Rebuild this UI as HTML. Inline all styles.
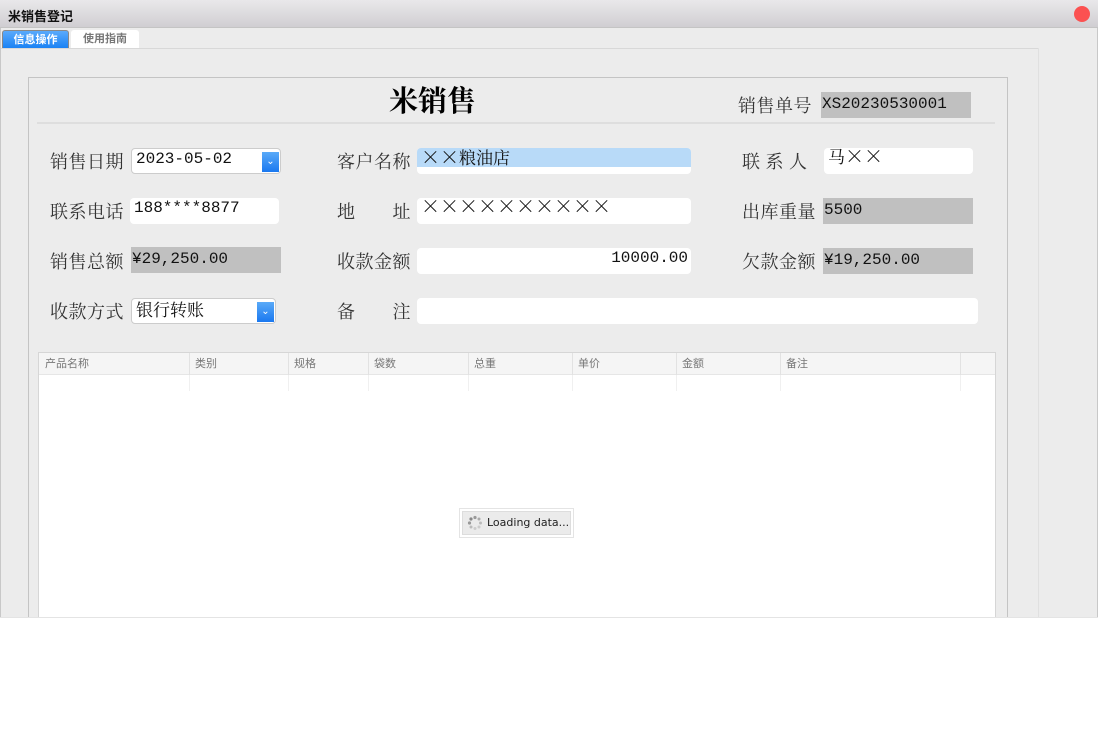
<!DOCTYPE html>
<html><head><meta charset="utf-8"><style>
*{margin:0;padding:0;box-sizing:border-box}
body{width:1098px;height:737px;background:#fff;position:relative;overflow:hidden;font-family:"Liberation Serif","Noto Serif CJK SC",serif}
.a{position:absolute}
.win{left:0;top:0;width:1098px;height:618px;background:#ececec;border:1px solid #c8c8c8;border-top:none}
.tb{left:0;top:0;width:1098px;height:28px;background:linear-gradient(#e9e8ea,#d0ced2);border-bottom:1px solid #c4c4c4}
.tt{left:8px;top:6px;font:bold 13px "Liberation Sans","Noto Sans CJK SC",sans-serif;color:#111}
.close{left:1074px;top:6px;width:16px;height:16px;border-radius:50%;background:#fb5151}
.tab{top:30px;height:18px;font:bold 11px "Liberation Sans","Noto Sans CJK SC",sans-serif;text-align:center;line-height:18px}
.lbl{font-size:18px;color:#333;line-height:20px;white-space:nowrap;letter-spacing:0.5px}
.in{background:#fff;border-radius:4px;height:26px;font:16px "Liberation Mono","Noto Serif CJK SC",monospace;line-height:20px;padding-left:4px;color:#111;white-space:nowrap;overflow:hidden}
.cj{font-family:"Noto Serif CJK SC",serif;font-size:17px}
.x{font-family:"Noto Sans CJK SC",sans-serif;font-size:19px;font-weight:300}
.g{background:#c0c0c0;border-radius:0;padding-left:1px}
.dd{position:absolute;right:1px;top:3px;width:17px;height:20px;background:linear-gradient(#5aaaf8,#1a78f0);color:#fff;font:10px sans-serif;text-align:center;line-height:20px}
.hd{top:353px;height:22px;border-right:1px solid #e2e2e2;font:11px "Liberation Sans","Noto Sans CJK SC",sans-serif;color:#777;line-height:22px;padding-left:6px}
.col{top:375px;height:16px;border-right:1px solid #f0f0f0}
</style></head><body>
<div class="a win"></div>
<div class="a tb"></div>
<div class="a tt">米销售登记</div>
<div class="a close"></div>
<div class="a tab" style="left:2px;width:67px;background:linear-gradient(#5aaafc,#1a82f4);color:#fff;border-radius:3px 3px 0 0;border:1px solid #888;border-bottom:none">信息操作</div>
<div class="a tab" style="left:71px;width:68px;background:#fff;color:#777;border-radius:3px 3px 0 0">使用指南</div>
<div class="a" style="left:1px;top:48px;width:1037px;height:1px;background:#d8d8d8"></div>
<div class="a" style="left:1038px;top:48px;width:1px;height:570px;background:#e0e0e0"></div>
<div class="a" style="left:28px;top:77px;width:980px;height:541px;border:1px solid #c4c4c4;border-bottom:none"></div>
<div class="a" style="left:389px;top:84px;font-size:29px;font-weight:bold;color:#000;line-height:36px">米销售</div>
<div class="a lbl" style="left:738px;top:96px">销售单号</div>
<div class="a in g" style="left:821px;top:92px;width:150px;line-height:24px">XS20230530001</div>
<div class="a" style="left:37px;top:122px;width:958px;height:2px;background:#dedede"></div>

<div class="a lbl" style="left:50px;top:152px">销售日期</div>
<div class="a in" style="left:131px;top:148px;width:150px;border:1px solid #ccc">2023-05-02<div class="dd">&#8964;</div></div>
<div class="a lbl" style="left:50px;top:202px">联系电话</div>
<div class="a in" style="left:130px;top:198px;width:149px">188****8877</div>
<div class="a lbl" style="left:50px;top:252px">销售总额</div>
<div class="a in g" style="left:131px;top:247px;width:150px;line-height:24px">¥29,250.00</div>
<div class="a lbl" style="left:50px;top:302px">收款方式</div>
<div class="a in" style="left:131px;top:298px;width:145px;border:1px solid #ccc"><span class="cj">银行转账</span><div class="dd">&#8964;</div></div>

<div class="a lbl" style="left:337px;top:152px">客户名称</div>
<div class="a in" style="left:417px;top:148px;width:274px;padding:0"><div style="background:#b8daf8;height:19px;padding-left:4px;line-height:17px"><span class="x">××</span><span class="cj">粮油店</span></div></div>
<div class="a lbl" style="left:337px;top:202px">地&emsp;&emsp;址</div>
<div class="a in" style="left:417px;top:198px;width:274px;line-height:16px"><span class="x">××××××××××</span></div>
<div class="a lbl" style="left:337px;top:252px">收款金额</div>
<div class="a in" style="left:417px;top:248px;width:274px;text-align:right;padding-right:3px">10000.00</div>
<div class="a lbl" style="left:337px;top:302px">备&emsp;&emsp;注</div>
<div class="a in" style="left:417px;top:298px;width:561px"></div>

<div class="a lbl" style="left:742px;top:152px">联&nbsp;系&nbsp;人</div>
<div class="a in" style="left:824px;top:148px;width:149px;line-height:16px"><span class="cj">马</span><span class="x">××</span></div>
<div class="a lbl" style="left:742px;top:202px">出库重量</div>
<div class="a in g" style="left:823px;top:198px;width:150px;line-height:24px">5500</div>
<div class="a lbl" style="left:742px;top:252px">欠款金额</div>
<div class="a in g" style="left:823px;top:248px;width:150px;line-height:24px">¥19,250.00</div>

<div class="a" style="left:38px;top:352px;width:958px;height:266px;background:#fff;border:1px solid #d6d6d6;border-bottom:none"></div>
<div class="a" style="left:39px;top:353px;width:956px;height:22px;background:#f5f5f5;border-bottom:1px solid #e6e6e6"></div>
<div class="a hd" style="left:39px;width:151px">产品名称</div>
<div class="a hd" style="left:189px;width:100px">类别</div>
<div class="a hd" style="left:288px;width:81px">规格</div>
<div class="a hd" style="left:368px;width:101px">袋数</div>
<div class="a hd" style="left:468px;width:105px">总重</div>
<div class="a hd" style="left:572px;width:105px">单价</div>
<div class="a hd" style="left:676px;width:105px">金额</div>
<div class="a hd" style="left:780px;width:181px">备注</div>
<div class="a col" style="left:39px;width:151px"></div>
<div class="a col" style="left:189px;width:100px"></div>
<div class="a col" style="left:288px;width:81px"></div>
<div class="a col" style="left:368px;width:101px"></div>
<div class="a col" style="left:468px;width:105px"></div>
<div class="a col" style="left:572px;width:105px"></div>
<div class="a col" style="left:676px;width:105px"></div>
<div class="a col" style="left:780px;width:181px"></div>
<div class="a" style="left:459px;top:508px;width:115px;height:30px;border:1px solid #e4e4e4;background:#fff"></div>
<div class="a" style="left:462px;top:511px;width:109px;height:24px;background:#ebebeb;border:1px solid #ddd;font:11px 'DejaVu Sans',sans-serif;color:#222;line-height:22px;padding-left:24px">Loading data...</div>
<svg class="a" style="left:467px;top:515px" width="16" height="16" viewBox="0 0 16 16"><g fill="#999"><circle cx="8" cy="2.5" r="1.6"/><circle cx="12" cy="4" r="1.5" fill="#aaa"/><circle cx="13.5" cy="8" r="1.5" fill="#bbb"/><circle cx="12" cy="12" r="1.5" fill="#ccc"/><circle cx="8" cy="13.5" r="1.5" fill="#ccc"/><circle cx="4" cy="12" r="1.5" fill="#bbb"/><circle cx="2.5" cy="8" r="1.6" fill="#999"/><circle cx="4" cy="4" r="1.6" fill="#888"/></g></svg>
<div class="a" style="left:0;top:617px;width:1098px;height:1px;background:#e4e4e4"></div>
</body></html>
